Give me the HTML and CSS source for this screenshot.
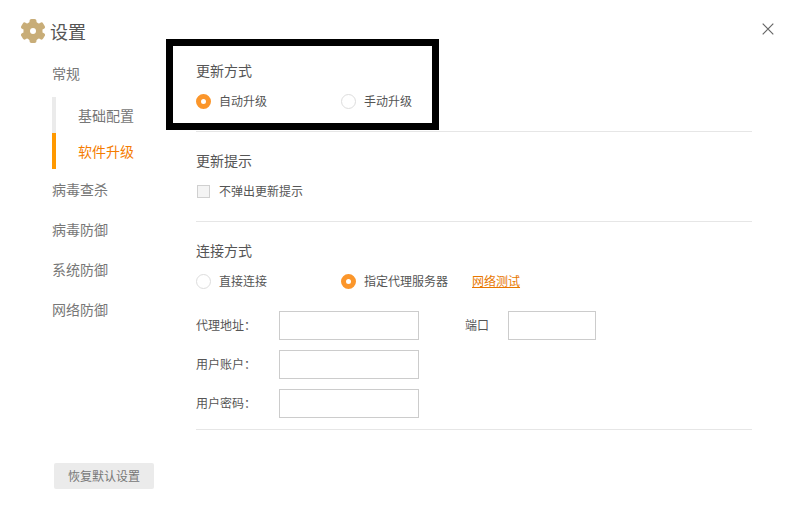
FILE: index.html
```html
<!DOCTYPE html>
<html lang="zh-CN">
  <head>
    <meta charset="UTF-8" />
    <meta name="viewport" content="width=device-width, initial-scale=1.0" />
    <title>设置</title>
    <link rel="stylesheet" href="styles.css">
  </head>

  <body>
    <header class="header">
      <svg class="gear" viewBox="0 0 24 24">
        <circle cx="12" cy="12" r="9.600" />
        <rect x="8.500" y="0" width="7" height="24" rx="2" />
        <rect x="8.500" y="-.6" width="7" height="25.200" rx="2" transform="rotate(60 12 12)" />
        <rect x="8.500" y="-.6" width="7" height="25.200" rx="2" transform="rotate(120 12 12)" />
        <circle class="gear-hole" cx="12" cy="12" r="3" />
      </svg>
      <h1 class="title">设置</h1>
      <svg class="close" viewBox="0 0 12 12">
        <path d="M.7.7l10.600 10.600M11.300.7L.7 11.300" />
      </svg>
    </header>

    <div class="main">
      <nav class="sidebar">
        <a class="nav-item">常规</a>
        <div class="submenu">
          <a class="submenu-item">基础配置</a>
          <a class="submenu-item active">软件升级</a>
        </div>
        <a class="nav-item">病毒查杀</a>
        <a class="nav-item">病毒防御</a>
        <a class="nav-item">系统防御</a>
        <a class="nav-item">网络防御</a>
        <button class="reset-button">恢复默认设置</button>
      </nav>

      <div class="content">
        <section class="section first">
          <h2>更新方式</h2>
          <div class="options">
            <label class="option"><input type="radio" name="update" checked /><span>自动升级</span></label>
            <label class="option"><input type="radio" name="update" /><span>手动升级</span></label>
          </div>
          <div class="highlight"></div>
        </section>

        <section class="section">
          <h2>更新提示</h2>
          <div class="options">
            <label class="option"><input type="checkbox" /><span>不弹出更新提示</span></label>
          </div>
        </section>

        <section class="section connection">
          <h2>连接方式</h2>
          <div class="options">
            <label class="option"><input type="radio" name="connect" /><span>直接连接</span></label>
            <label class="option"><input type="radio" name="connect" checked /><span>指定代理服务器</span></label>
            <a class="test-link">网络测试</a>
          </div>
          <div class="proxy-form">
            <div class="field">
              <label for="address">代理地址：</label>
              <input type="text" id="address" />
              <label class="port-label" for="port">端口</label>
              <input type="text" class="port" id="port" />
            </div>
            <div class="field">
              <label for="user">用户账户：</label>
              <input type="text" id="user" />
            </div>
            <div class="field">
              <label for="password">用户密码：</label>
              <input type="password" id="password" />
            </div>
          </div>
        </section>
      </div>
    </div>
  </body>
</html>
```
FILE: styles.css
```css
* {
  box-sizing: border-box;
}

body {
  display: flex;
  flex-direction: column;
  height: 515px;
  margin: 0;
  background-color: #fff;
  color: #555;
  font-family: "Noto Sans CJK SC", sans-serif;
  font-size: 12px;
}

.header {
  display: flex;
  align-items: flex-start;
  height: 54px;
  padding: 19px 26px 0 21px;
}

.gear {
  width: 24px;
  height: 24px;
  fill: #c8ad78;
}

.gear-hole {
  fill: #fff;
}

.title {
  margin: 0 0 0 5px;
  font-size: 18px;
  font-weight: 400;
  line-height: 24px;
}

.close {
  width: 12px;
  height: 12px;
  margin: 4px 0 0 auto;
  stroke: #666;
  stroke-width: 1.2;
}

.main {
  display: flex;
  flex: 1;
}

.sidebar {
  display: flex;
  flex-direction: column;
  width: 196px;
  padding: 0 0 26px 52px;
  color: #777;
  font-size: 14px;
}

.nav-item {
  padding-bottom: 2px;
  line-height: 38px;
}

.submenu {
  margin: 3px 0 1px;
}

.submenu-item {
  display: block;
  padding-left: 22px;
  border-left: 4px solid #ebebeb;
  line-height: 36px;
}

.submenu-item.active {
  border-color: #ff9900;
  color: #f57c00;
}

.reset-button {
  width: 100px;
  height: 26px;
  margin: auto 0 0 2px;
  padding: 0 0 2px;
  border: none;
  border-radius: 2px;
  background-color: #ebebeb;
  color: #777;
  font: inherit;
  font-size: 12px;
}

.content {
  width: 556px;
}

.section {
  position: relative;
  padding: 12px 0 16px;
  border-bottom: 1px solid #e6e6e6;
}

.section.first {
  padding-top: 0;
}

.section.connection {
  padding-bottom: 11px;
}

.section h2 {
  margin: 0;
  padding-bottom: 2px;
  font-size: 14px;
  font-weight: 400;
  line-height: 32px;
}

.options {
  display: flex;
  height: 27px;
}

.option {
  display: flex;
  align-items: center;
}

.option:first-child {
  min-width: 145px;
}

.option span {
  padding-bottom: 2px;
}

.option input {
  appearance: none;
  flex: none;
  width: 15px;
  height: 15px;
  margin: 0 8px 0 0;
  border: 1px solid #ddd;
  border-radius: 50%;
}

.option input[type="radio"]:checked {
  border: 5px solid #fb962b;
}

.option input[type="checkbox"] {
  width: 13px;
  height: 13px;
  margin: 0 9px 0 1px;
  border-color: #d0d0d0;
  border-radius: 0;
  background-color: #f4f4f4;
}

.test-link {
  margin-left: 24px;
  color: #e87700;
  line-height: 25px;
  text-decoration: underline;
}

.proxy-form {
  display: flex;
  flex-direction: column;
  gap: 10px;
  margin-top: 16px;
}

.field {
  display: flex;
  align-items: center;
}

.field label {
  width: 83px;
  padding-bottom: 2px;
}

.field input {
  width: 140px;
  height: 29px;
  padding: 0 6px;
  border: 1px solid #ccc;
}

.field .port-label {
  width: 43px;
  margin-left: 46px;
}

.field .port {
  width: 88px;
}

/* frame around the update mode options */
.highlight {
  position: absolute;
  top: -15px;
  left: -30px;
  width: 273px;
  height: 91px;
  border: 7px solid #000;
  pointer-events: none;
}
```
